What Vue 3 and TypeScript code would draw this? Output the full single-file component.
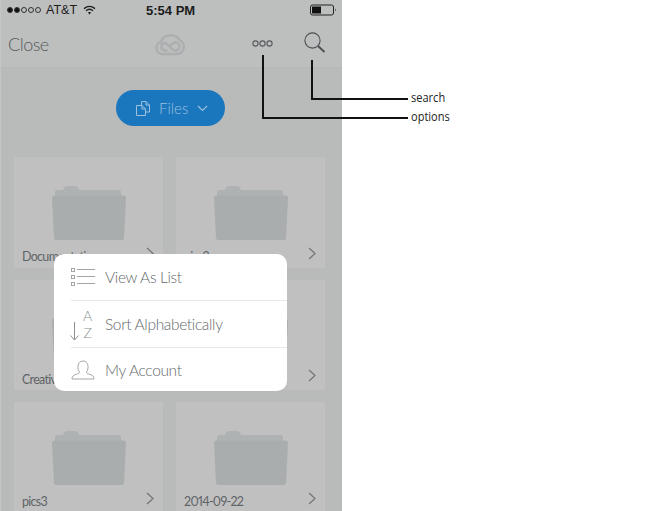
<template>
  <div class="page">
    <div class="phone">
      <div class="status-bar">
        <div class="signal">
          <span v-for="n in 5" :key="n" class="dot" :class="{ full: n < 3 }"></span>
        </div>
        <span class="carrier">AT&amp;T</span>
        <svg class="wifi" width="13" height="10" viewBox="0 0 13 10">
          <path d="M1 3.6 Q6.5 -0.8 12 3.6" fill="none" stroke="#1c1c1c" stroke-width="1.4" />
          <path d="M3 5.8 Q6.5 2.8 10 5.8" fill="none" stroke="#1c1c1c" stroke-width="1.4" />
          <path d="M4.8 7.6 Q6.5 6.2 8.2 7.6 L6.5 9.6 Z" fill="#1c1c1c" />
        </svg>
        <span class="time">5:54 PM</span>
        <svg class="battery" width="27" height="12" viewBox="0 0 27 12">
          <rect x="0.5" y="1" width="23" height="10" rx="2" fill="none" stroke="#222" />
          <rect x="2" y="2.5" width="9" height="7" fill="#111" />
          <path d="M25 4.5 Q26.5 6 25 7.5 Z" fill="#222" />
        </svg>
      </div>

      <header class="nav">
        <span class="close">Close</span>
        <svg class="cc-logo" width="30" height="22" viewBox="0 0 30 22" fill="none" stroke="#abafaf" stroke-width="2.4">
          <path d="M8 20 H21.500 A7.200 7.200 0 0 0 25 6.500 A11 11 0 0 0 5.500 8 A6.200 6.200 0 0 0 8 20 Z" />
          <path d="M12.500 16.500 H9.500 A3.800 3.800 0 0 1 9.500 9 C13.500 9 15.500 16.500 20.500 16.500 A4 4 0 0 0 20.500 8.500 C18 8.500 16.500 10 15 12" />
        </svg>
        <svg class="more" width="21" height="7" viewBox="0 0 21 7" fill="none" stroke="#555a5d" stroke-width="1.1">
          <circle cx="3.5" cy="3.5" r="2.6" />
          <circle cx="10.5" cy="3.5" r="2.6" />
          <circle cx="17.5" cy="3.5" r="2.6" />
        </svg>
        <svg class="search" width="22" height="21" viewBox="0 0 22 21" fill="none" stroke="#4c5154">
          <circle cx="8.5" cy="8.5" r="7.6" stroke-width="1.1" />
          <path d="M14 14 L20.5 20" stroke-width="1.9" />
        </svg>
      </header>

      <div class="switcher">
        <button class="files-btn">
          <svg width="14" height="15" viewBox="0 0 14 15" fill="none" stroke="#9dc0de">
            <path d="M5.500 4 V0.500 H10 L13.500 4 V11 H9.500 M10 0.500 V4 H13.500" />
            <path d="M0.500 4.500 H6 L9.500 8 V14.500 H0.500 Z M6 4.500 V8 H9.500" />
          </svg>
          <span class="files-text">Files</span>
          <svg width="11" height="7" viewBox="0 0 11 7" fill="none" stroke="#9dc0de" stroke-width="1.2">
            <path d="M1 1 L5.5 5.5 L10 1" />
          </svg>
        </button>
      </div>

      <div class="grid">
        <div v-for="item in folders" :key="item.id" class="card">
          <svg class="folder" width="74" height="55" viewBox="0 0 74 55">
            <path d="M3 14 V7 Q3 5 5 5 H11 Q12 1 15 1 H23 Q26 1 27 5 H67 Q69 5 69 7 V14 Z" fill="#aeb2b2" />
            <path d="M0 13 Q0 10.500 2 10.500 H72 Q74 10.500 74 13 L72 53 Q72 55 70 55 H4 Q2 55 2 53 Z" fill="#a9adad" />
          </svg>
          <div class="card-foot">
            <span class="label">{{ item.name }}</span>
            <svg class="chev" width="8" height="13" viewBox="0 0 8 13" fill="none" stroke="#6f7477" stroke-width="1.2">
              <path d="M1 1 L7 6.500 L1 12" />
            </svg>
          </div>
        </div>
      </div>

      <div class="menu">
        <div class="menu-row">
          <svg class="menu-icon" width="24" height="18" viewBox="0 0 24 18" fill="none" stroke="#a3a6a8">
            <rect x="0.5" y="0.500" width="3" height="3" />
            <rect x="0.5" y="7.500" width="3" height="3" />
            <rect x="0.5" y="14.500" width="3" height="3" />
            <path d="M6 1.500 H24 M6 8.500 H24 M6 15.500 H24" />
          </svg>
          <span>View As List</span>
        </div>
        <div class="menu-row">
          <div class="menu-icon sort-icon">
            <svg width="9" height="19" viewBox="0 0 9 19" fill="none" stroke="#8b8f91">
              <path d="M4.500 0 V18 M0.500 13.500 L4.500 18 L8.500 13.500" />
            </svg>
            <div class="az"><span>A</span><span>Z</span></div>
          </div>
          <span>Sort Alphabetically</span>
        </div>
        <div class="menu-row">
          <svg class="menu-icon" width="24" height="20" viewBox="0 0 24 20" fill="none" stroke="#a3a6a8">
            <path d="M8.500 12 C6 9 6 1 12 1 C18 1 18 9 15.500 12 C15 14 20 14 22 16 Q23 17 23 19 H1 Q1 17 2 16 C4 14 9 14 8.500 12 Z" />
          </svg>
          <span>My Account</span>
        </div>
      </div>
    </div>

    <!-- callout lines and their captions -->
    <div class="callout line-options"></div>
    <div class="callout line-search"></div>
    <span class="caption cap-search">search</span>
    <span class="caption cap-options">options</span>
  </div>
</template>

<script setup lang="ts">
interface Folder {
  id: number;
  name: string;
}

const folders: Folder[] = [
  { id: 1, name: 'Documentation' },
  { id: 2, name: 'pics2' },
  { id: 3, name: 'Creative' },
  { id: 4, name: 'pics' },
  { id: 5, name: 'pics3' },
  { id: 6, name: '2014-09-22' },
];
</script>

<style>
html,
body {
  margin: 0;
  background: #fff;
}
</style>

<style scoped>
.page {
  position: relative;
  width: 672px;
  height: 511px;
  overflow: hidden;
  background: #fff;
  font-family: Lato, "Open Sans", sans-serif;
}

.phone {
  position: relative;
  width: 342px;
  height: 511px;
  box-sizing: border-box;
  background: #b9bbbb;
  border-left: 1px solid #c4c5c5;
}

/* --- Status bar --- */
.status-bar {
  display: flex;
  align-items: center;
  height: 20px;
  padding-left: 6px;
  background: #bdbebe;
  font-family: "Liberation Sans", Arial, sans-serif;
  font-size: 12.5px;
  color: #1c1c1c;
}

.signal {
  display: flex;
  gap: 1px;
  margin-right: 5px;
}

.dot {
  width: 6px;
  height: 6px;
  border: 1px solid #333;
  border-radius: 50%;
  box-sizing: border-box;
}

.dot.full {
  background: #111;
}

.carrier {
  width: 37px;
}

.time {
  margin-left: 50px;
  font-size: 13px;
  font-weight: 700;
}

.battery {
  margin-left: 115px;
}

/* --- Nav --- */
.nav {
  display: flex;
  align-items: center;
  height: 48px;
  padding-left: 7px;
  background: #bdbebe;
  border-bottom: 1px solid #b5b8b8;
  box-sizing: border-box;
}

.close {
  width: 147px;
  font-size: 18px;
  font-weight: 300;
  letter-spacing: -0.5px;
  color: #565b5e;
}

.cc-logo {
  margin-top: 3px;
}

.more {
  margin-left: 67px;
}

.search {
  margin-left: 31px;
  margin-top: -3px;
}

/* --- Files pill --- */
.switcher {
  display: flex;
  padding: 22px 0 31px 115px;
}

.files-btn {
  display: flex;
  align-items: center;
  width: 109px;
  height: 36px;
  padding: 0 0 0 20px;
  border: none;
  border-radius: 18px;
  background: #1a76bd;
  color: #9dc0de;
  font-family: inherit;
  font-size: 15px;
  font-weight: 300;
}

.files-text {
  width: 38px;
  margin-left: 9px;
  text-align: left;
}

/* --- Folder grid --- */
.grid {
  display: grid;
  grid-template-columns: 149px 149px;
  column-gap: 13px;
  row-gap: 12px;
  padding-left: 13px;
}

.card {
  height: 110.500px;
  background: #c0c0c0;
  box-sizing: border-box;
  padding-top: 28px;
}

.folder {
  display: block;
  margin: 0 auto;
}

.card-foot {
  display: flex;
  align-items: center;
  justify-content: space-between;
  padding: 4px 9px 0 8px;
}

.label {
  margin-top: 5px;
  font-size: 12.500px;
  font-weight: 400;
  letter-spacing: -0.700px;
  font-variant-numeric: proportional-nums;
  color: #5f6467;
  white-space: nowrap;
}

.chev {
  margin-bottom: 2px;
}

/* --- Popover menu --- */
.menu {
  position: absolute;
  left: 53px;
  top: 254px;
  width: 233px;
  height: 137px;
  padding-left: 17px;
  box-sizing: border-box;
  background: #fff;
  border-radius: 10px;
  font-size: 15.500px;
  font-weight: 300;
  letter-spacing: -0.350px;
  color: #666a6c;
}

.menu-row {
  display: flex;
  align-items: center;
  gap: 10px;
  height: 47px;
  box-sizing: border-box;
  border-bottom: 1px solid #e8e8e8;
}

.menu-row:last-child {
  border-bottom: none;
  height: 43px;
}

.menu-icon {
  width: 24px;
  flex: none;
}

.sort-icon {
  display: flex;
  align-items: flex-end;
  gap: 4px;
  margin-left: -1px;
  margin-right: 1px;
}

.az {
  display: flex;
  flex-direction: column;
  align-items: center;
  gap: 1px;
  font-size: 14px;
  font-weight: 300;
  line-height: 16px;
  letter-spacing: 0;
  color: #8b8f91;
}

/* --- Callouts --- */
.callout {
  position: absolute;
  box-sizing: border-box;
  border-left: 2px solid #111;
  border-bottom: 2px solid #111;
}

.line-options {
  left: 262px;
  top: 55px;
  width: 146px;
  height: 64px;
}

.line-search {
  left: 311px;
  top: 60px;
  width: 97px;
  height: 40px;
}

.caption {
  position: absolute;
  left: 411px;
  font-family: "Open Sans", sans-serif;
  font-size: 12px;
  line-height: 14px;
  color: #222;
  transform: scaleX(0.92);
  transform-origin: left;
}

.cap-search {
  top: 91px;
}

.cap-options {
  top: 110px;
}
</style>
